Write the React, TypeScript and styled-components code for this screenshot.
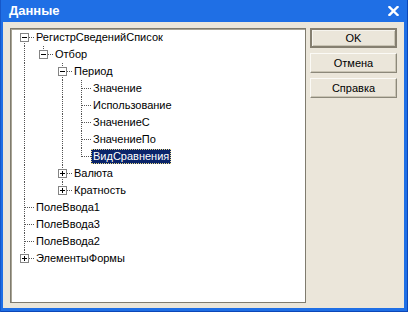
import styled, { createGlobalStyle, css } from 'styled-components';

const GlobalStyle = createGlobalStyle`
  html, body {
    margin: 0;
    padding: 0;
    background: #fff;
  }
  * {
    box-sizing: border-box;
  }
`;

const Window = styled.div`
  width: 408px;
  height: 312px;
  display: flex;
  flex-direction: column;
  padding: 0 4px 4px 3px;
  background: #1f6fe5;
  box-shadow: inset 1px 0 #1657c9, inset -1px -1px #0b47b8;
  font-family: "Liberation Sans", Arial, sans-serif;
`;

const TitleBar = styled.div`
  height: 22px;
  flex: none;
  display: flex;
  align-items: center;
  justify-content: space-between;
  padding: 0 5px 1px 6px;
  color: #fff;
  font-weight: bold;
  font-size: 13px;
`;

const CloseIcon = () => (
  <svg width="11" height="10" viewBox="0 0 11 10">
    <path d="M1.5 1 L9.5 9 M9.5 1 L1.5 9" stroke="#fff" strokeWidth="2.4" strokeLinecap="square" />
  </svg>
);

const Client = styled.div`
  flex: 1;
  display: flex;
  gap: 4px;
  padding: 6px 7px 5px 7px;
  background: #ebe6da;
`;

const TreeBox = styled.div`
  flex: 1;
  background: #fff;
  border: 1px solid #7f7b6e;
  box-shadow: inset 1px 1px #a9a596;
  padding: 0 0 0 4px;
  font-size: 11px;
  color: #000;
  overflow: hidden;
`;

const ButtonColumn = styled.div`
  width: 87px;
  flex: none;
  display: flex;
  flex-direction: column;
  gap: 5px;
`;

const Button = styled.button<{ $default?: boolean }>`
  height: 20px;
  width: 100%;
  padding: 0;
  font-family: "Liberation Sans", Arial, sans-serif;
  font-size: 11px;
  color: #000;
  background: #ebe6da;
  border: 1px solid;
  border-color: #fbfaf6 #8c887a #8c887a #fbfaf6;
  box-shadow: inset -1px -1px #c9c4b4;
  ${(p) =>
    p.$default &&
    css`
      border: 2px solid #857f70;
      box-shadow: inset 1px 1px #f6f4ee, inset -1px -1px #c9c4b4;
    `}
`;

const dotsV = 'repeating-linear-gradient(to bottom, #555 0 1px, transparent 1px 2px)';
const dotsH = 'repeating-linear-gradient(to right, #555 0 1px, transparent 1px 2px)';

const Row = styled.div`
  display: flex;
  height: 17px;
  align-items: center;
`;

const Guide = styled.span<{ $line: boolean }>`
  position: relative;
  width: 19px;
  height: 17px;
  flex: none;
  ${(p) =>
    p.$line &&
    css`
      &::before {
        content: '';
        position: absolute;
        left: 9px;
        top: 0;
        bottom: 0;
        width: 1px;
        background: ${dotsV};
      }
    `}
`;

const Connector = styled.span<{ $top: number; $bottom: number }>`
  position: relative;
  width: 19px;
  height: 17px;
  flex: none;
  &::before {
    content: '';
    position: absolute;
    left: 9px;
    top: ${(p) => p.$top}px;
    bottom: ${(p) => p.$bottom}px;
    width: 1px;
    background: ${dotsV};
  }
  &::after {
    content: '';
    position: absolute;
    left: 10px;
    right: 0;
    top: 8px;
    height: 1px;
    background: ${dotsH};
  }
`;

const Expander = styled.span<{ $open: boolean }>`
  position: absolute;
  left: 5px;
  top: 4px;
  width: 9px;
  height: 9px;
  z-index: 1;
  background: #fff;
  border: 1px solid #848484;
  &::before {
    content: '';
    position: absolute;
    left: 1px;
    top: 3px;
    width: 5px;
    height: 1px;
    background: #000;
  }
  ${(p) =>
    !p.$open &&
    css`
      &::after {
        content: '';
        position: absolute;
        left: 3px;
        top: 1px;
        width: 1px;
        height: 5px;
        background: #000;
      }
    `}
`;

const Label = styled.span<{ $selected?: boolean }>`
  height: 15px;
  line-height: 13px;
  padding: 0 1px;
  border: 1px solid transparent;
  white-space: nowrap;
  ${(p) =>
    p.$selected &&
    css`
      background: #0a246a;
      color: #fff;
      border: 1px dotted #e8d88a;
    `}
`;

type Node = {
  label: string;
  open?: boolean;
  selected?: boolean;
  children?: Node[];
};

const leaf = (label: string, selected = false): Node => ({ label, selected });
const closed = (label: string): Node => ({ label, children: [leaf('-')] });

const tree: Node[] = [
  {
    label: 'РегистрСведенийСписок',
    open: true,
    children: [
      {
        label: 'Отбор',
        open: true,
        children: [
          {
            label: 'Период',
            open: true,
            children: [
              leaf('Значение'),
              leaf('Использование'),
              leaf('ЗначениеС'),
              leaf('ЗначениеПо'),
              leaf('ВидСравнения', true),
            ],
          },
          closed('Валюта'),
          closed('Кратность'),
        ],
      },
    ],
  },
  leaf('ПолеВвода1'),
  leaf('ПолеВвода3'),
  leaf('ПолеВвода2'),
  closed('ЭлементыФормы'),
];

type FlatRow = {
  node: Node;
  guides: boolean[];
  first: boolean;
  last: boolean;
};

const flatten = (nodes: Node[], guides: boolean[], root: boolean, out: FlatRow[]) => {
  nodes.forEach((node, i) => {
    const last = i === nodes.length - 1;
    out.push({ node, guides, first: root && i === 0, last });
    if (node.open && node.children) {
      flatten(node.children, [...guides, !last], false, out);
    }
  });
  return out;
};

const rows = flatten(tree, [], true, []);

const App = () => (
  <>
    <GlobalStyle />
    <Window>
      <TitleBar>
        <span>Данные</span>
        <CloseIcon />
      </TitleBar>
      <Client>
        <TreeBox>
          {rows.map(({ node, guides, first, last }, i) => (
            <Row key={i}>
              {guides.map((g, j) => (
                <Guide key={j} $line={g} />
              ))}
              <Connector $top={first ? 8 : 0} $bottom={last ? 8 : 0}>
                {node.children && <Expander $open={!!node.open} />}
              </Connector>
              <Label $selected={node.selected}>{node.label}</Label>
            </Row>
          ))}
        </TreeBox>
        <ButtonColumn>
          <Button $default>OK</Button>
          <Button>Отмена</Button>
          <Button>Справка</Button>
        </ButtonColumn>
      </Client>
    </Window>
  </>
);

export default App;
